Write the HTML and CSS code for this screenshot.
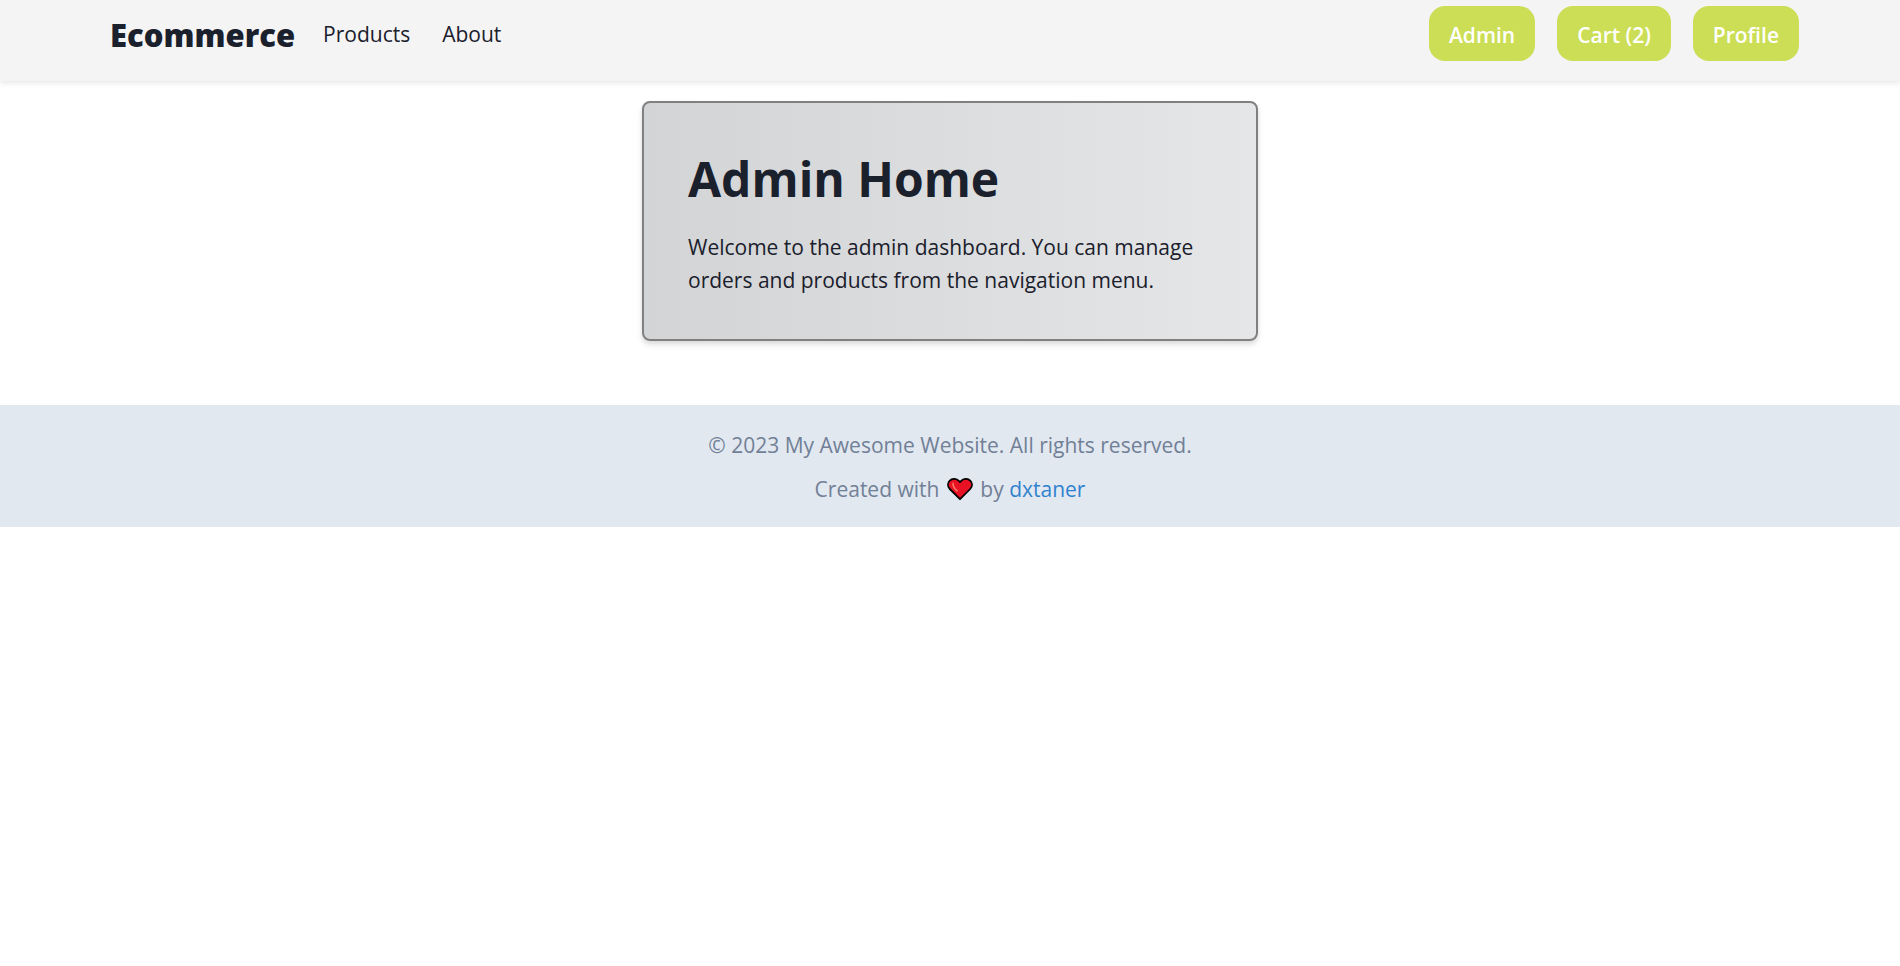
FILE: index.html
```
<!DOCTYPE html>
<html lang="en">
<head>
<meta charset="utf-8">
<meta name="viewport" content="width=device-width, initial-scale=1">
<title>Ecommerce</title>
<link rel="stylesheet" href="styles.css">
</head>
<body>
<header class="header">
  <a class="brand" href="#">Ecommerce</a>
  <nav class="nav">
    <a class="nav-link" href="#">Products</a>
    <a class="nav-link" href="#">About</a>
  </nav>
  <div class="actions">
    <button class="action" type="button">Admin</button>
    <button class="action" type="button">Cart (2)</button>
    <button class="action" type="button">Profile</button>
  </div>
</header>
<main class="main">
  <section class="card">
    <h1 class="card-title">Admin Home</h1>
    <p class="card-text">Welcome to the admin dashboard. You can manage orders and products from the navigation menu.</p>
  </section>
</main>
<footer class="footer">
  <p>© 2023 My Awesome Website. All rights reserved.</p>
  <p>Created with <svg class="heart" viewBox="0 0 26 24" role="img" aria-label="love"><path d="M13 22.2 2.8 12C.4 9.5.4 6 2.6 3.8 5 1.400 8.800 1.200 11.200 3.400L13 5l1.800-1.600c2.400-2.200 6.200-2 8.600.4 2.200 2.200 2.200 5.700-.2 8.200z" fill="#e81224" stroke="#000" stroke-width="1.800" stroke-linejoin="round"/><path d="M6 6.500c.2 3 1.500 5.300 4 7.300" fill="none" stroke="#f4725e" stroke-width="1.800" stroke-linecap="round"/></svg> by <a class="author" href="#">dxtaner</a></p>
</footer>
</body>
</html>
```
FILE: styles.css
```
* {
  box-sizing: border-box;
  margin: 0;
}

body {
  background: #fff;
  color: #1a202c;
  font-family: "Segoe UI", "Open Sans", "Noto Sans", sans-serif;
  font-size: 21px;
  line-height: 33px;
}

a {
  color: inherit;
  text-decoration: none;
}

.header {
  display: flex;
  align-items: flex-start;
  padding: 6px 101px 17px 110px;
  background: #f4f4f4;
  box-shadow: 0 2px 6px rgba(0, 0, 0, 0.1);
}

.brand {
  margin-right: 28px;
  font-size: 31px;
  font-weight: 800;
  line-height: 58px;
}

.nav {
  display: flex;
  gap: 32px;
  line-height: 56px;
}

.actions {
  display: flex;
  gap: 22px;
  margin-left: auto;
}

.action {
  height: 55px;
  padding: 3px 20px 0;
  border: 0;
  border-radius: 16px;
  background: #cbde55;
  color: #fff;
  font: inherit;
  font-weight: 600;
}

.main {
  display: flex;
  justify-content: center;
  padding: 20px 22px 64px;
}

.card {
  width: 100%;
  max-width: 616px;
  padding: 46px 44px 42px;
  border: 2px solid #808080;
  border-radius: 8px;
  background: linear-gradient(to right, #d3d4d6, #d9dadb 35%, #e5e6e7);
  box-shadow: 0 4px 6px rgba(0, 0, 0, 0.1), 0 2px 4px rgba(0, 0, 0, 0.06);
}

.card-title {
  margin-bottom: 22px;
  font-size: 48px;
  font-weight: 700;
  line-height: 60px;
}

.footer {
  display: flex;
  flex-direction: column;
  align-items: center;
  gap: 11px;
  padding: 24px 22px 21px;
  background: #e2e8f0;
  color: #718096;
  text-align: center;
}

.heart {
  width: 26px;
  height: 24px;
  margin: 0 2px;
  vertical-align: -4px;
}

.author {
  color: #3182ce;
}
```
